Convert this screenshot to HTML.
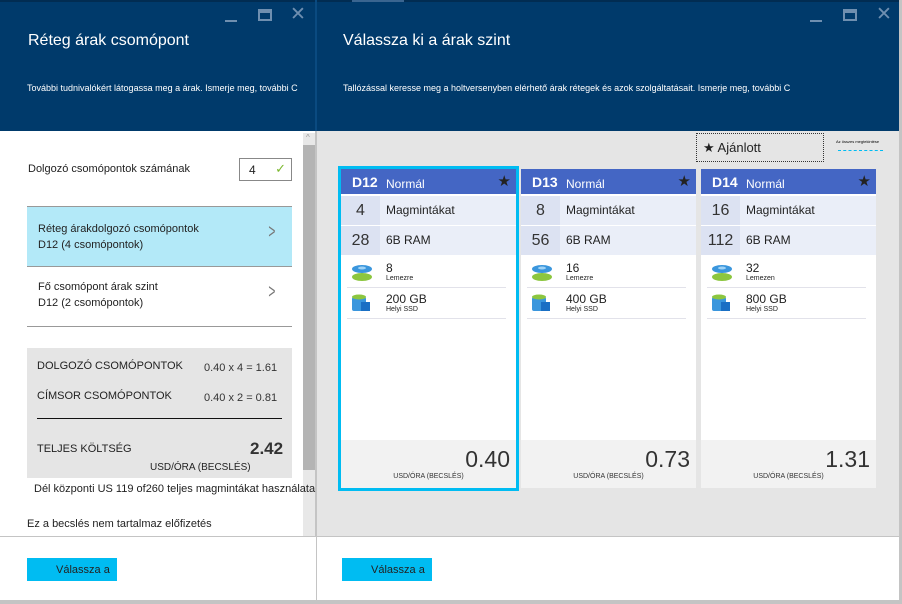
<!DOCTYPE html>
<html><head><meta charset="utf-8"><style>
*{margin:0;padding:0;box-sizing:border-box}
body{width:902px;height:604px;position:relative;overflow:hidden;background:#fff;font-family:"Liberation Sans",sans-serif;color:#222}
.a{position:absolute}
.hdr{background:#003a6b;color:#fff}
.t{font-size:16px;color:#fff}
.s{font-size:9px;color:#fff}
.ctrl{color:#6f8fb0}
.card{position:absolute;top:169px;width:175px;height:319px;background:#fff}
.ch{position:absolute;left:0;top:0;width:175px;height:25px;background:#4466c4;color:#fff}
.ch b{position:absolute;left:11px;top:5px;font-size:14px}
.ch span{position:absolute;left:45px;top:8px;font-size:12px}
.ch i{position:absolute;right:5px;top:3px;font-style:normal;font-size:15px;color:#222}
.row{position:absolute;left:0;width:175px;height:29px;background:#eaeef8}
.row .n{position:absolute;left:0;top:0;width:39px;height:29px;background:#dce2f2;text-align:center;font-size:16px;line-height:29px;color:#333}
.row .l{position:absolute;left:45px;top:0;line-height:29px;font-size:12px;color:#222}
.ic{position:absolute;left:0;width:175px;height:31px}
.ic .v{position:absolute;left:45px;top:4px;font-size:12px;color:#222}
.ic .u{position:absolute;left:45px;top:18px;font-size:7px;color:#222}
.ic .ln{position:absolute;left:6px;right:10px;bottom:0;height:1px;background:#e2e2ea}
.cf{position:absolute;left:0;top:271px;width:175px;height:48px;background:#f2f2f2}
.cf .p{position:absolute;right:6px;top:6px;font-size:23px;color:#333}
.cf .q{position:absolute;left:0;width:175px;text-align:center;top:33px;font-size:7px;color:#333}
</style></head><body>
<!-- headers -->
<div class="a hdr" style="left:0;top:0;width:316px;height:131px"></div>
<div class="a hdr" style="left:317px;top:0;width:585px;height:131px"></div>
<div class="a" style="left:0;top:0;width:902px;height:2px;background:#012c52"></div>
<div class="a" style="left:352px;top:0;width:52px;height:2px;background:#3a6590"></div>
<div class="a" style="left:315px;top:0;width:2px;height:604px;background:#c4c4c4"></div>
<div class="a" style="left:315px;top:0;width:2px;height:131px;background:#0a4a80"></div>
<!-- controls left -->
<div class="a" style="left:225px;top:20px;width:12px;height:2px;background:#6f8fb0"></div>
<div class="a" style="left:258px;top:9px;width:14px;height:12px;border:2px solid #6f8fb0;border-top-width:4px"></div>
<div class="a ctrl" style="left:290px;top:3px;font-size:19px">✕</div>
<div class="a" style="left:810px;top:20px;width:12px;height:2px;background:#6f8fb0"></div>
<div class="a" style="left:843px;top:9px;width:14px;height:12px;border:2px solid #6f8fb0;border-top-width:4px"></div>
<div class="a ctrl" style="left:876px;top:3px;font-size:19px">✕</div>
<div class="a t" style="left:28px;top:32px">Réteg árak csomópont</div>
<div class="a s" style="left:27px;top:83px">További tudnivalókért látogassa meg a árak. Ismerje meg, további C</div>
<div class="a t" style="left:343px;top:32px">Válassza ki a árak szint</div>
<div class="a s" style="left:343px;top:83px">Tallózással keresse meg a holtversenyben elérhető árak rétegek és azok szolgáltatásait. Ismerje meg, további C</div>
<!-- left content -->
<div class="a" style="left:303px;top:133px;width:12px;height:403px;background:#e8e8e8"></div>
<div class="a" style="left:303px;top:145px;width:12px;height:325px;background:#b4b4b4"></div>
<div class="a" style="left:306px;top:133px;font-size:8px;color:#999">^</div>
<div class="a" style="left:28px;top:163px;font-size:11px">Dolgozó csomópontok számának</div>
<div class="a" style="left:239px;top:158px;width:53px;height:23px;border:1px solid #888;font-size:12px;padding:4px 0 0 9px">4<span style="position:absolute;right:5px;top:2px;color:#7cb82f;font-size:13px">✓</span></div>
<div class="a" style="left:27px;top:206px;width:265px;height:60px;background:#b3e9f8;border-top:1px solid #999"></div>
<div class="a" style="left:38px;top:221px;font-size:11px;line-height:16px">Réteg árakdolgozó csomópontok<br>D12 (4 csomópontok)</div>
<div class="a" style="left:266px;top:221px;font-size:20px;color:#777;transform:scaleX(.6)">&gt;</div>
<div class="a" style="left:27px;top:266px;width:265px;height:1px;background:#999"></div>
<div class="a" style="left:38px;top:279px;font-size:11px;line-height:16px">Fő csomópont árak szint<br>D12 (2 csomópontok)</div>
<div class="a" style="left:266px;top:281px;font-size:20px;color:#777;transform:scaleX(.6)">&gt;</div>
<div class="a" style="left:27px;top:326px;width:265px;height:1px;background:#999"></div>
<div class="a" style="left:27px;top:348px;width:265px;height:130px;background:#e5e5e5"></div>
<div class="a" style="left:37px;top:360px;font-size:11px">DOLGOZÓ CSOMÓPONTOK</div>
<div class="a" style="left:204px;top:362px;font-size:11px;color:#333">0.40 x 4 = 1.61</div>
<div class="a" style="left:37px;top:390px;font-size:11px">CÍMSOR CSOMÓPONTOK</div>
<div class="a" style="left:204px;top:392px;font-size:11px;color:#333">0.40 x 2 = 0.81</div>
<div class="a" style="left:37px;top:418px;width:245px;height:1px;background:#111"></div>
<div class="a" style="left:37px;top:443px;font-size:11px">TELJES KÖLTSÉG</div>
<div class="a" style="left:250px;top:439px;font-size:17px;font-weight:bold;color:#333">2.42</div>
<div class="a" style="left:150px;top:462px;font-size:10px">USD/ÓRA (BECSLÉS)</div>
<div class="a" style="left:34px;top:483px;font-size:11px;white-space:nowrap">Dél központi US 119 of260 teljes magmintákat használata</div>
<div class="a" style="left:27px;top:518px;font-size:11px">Ez a becslés nem tartalmaz előfizetés</div>
<div class="a" style="left:0;top:536px;width:316px;height:68px;background:#fff;border-top:1px solid #c4c4c4"></div>
<div class="a" style="left:27px;top:558px;width:90px;height:23px;background:#00bcf2;font-size:11px;padding:6px 0 0 29px">Válassza a</div>
<!-- right content -->
<div class="a" style="left:317px;top:131px;width:585px;height:405px;background:#e5e5e5"></div>
<div class="a" style="left:696px;top:133px;width:128px;height:29px;border:1px dotted #333;font-size:13px;padding:6px 0 0 6px">★ Ajánlott</div>
<div class="a" style="left:836px;top:139px;font-size:4px;color:#000">Az összes megtekintése</div>
<div class="a" style="left:838px;top:150px;width:45px;height:1px;border-top:1px dashed #00bcf2"></div>

<div class="a" style="left:338px;top:166px;width:181px;height:325px;border:3px solid #00bcf2"></div>
<div class="card" style="left:341px">
 <div class="ch"><b>D12</b><span>Normál</span><i>★</i></div>
 <div class="row" style="top:27px"><div class="n">4</div><div class="l">Magmintákat</div></div>
 <div class="row" style="top:57px"><div class="n">28</div><div class="l">6B RAM</div></div>
 <div class="ic" style="top:88px"><svg class="a" style="left:10px;top:5px" width="22" height="20"><ellipse cx="11" cy="15" rx="10" ry="4" fill="#8cc63f"/><ellipse cx="11" cy="7" rx="10" ry="4" fill="#3a96dd"/><ellipse cx="11" cy="6" rx="4" ry="1.5" fill="#9fd2f5"/></svg><div class="v">8</div><div class="u">Lemezre</div><div class="ln"></div></div>
 <div class="ic" style="top:119px"><svg class="a" style="left:10px;top:5px" width="22" height="20"><rect x="1" y="4" width="14" height="14" rx="2" fill="#3a96dd"/><ellipse cx="8" cy="4" rx="7" ry="2.5" fill="#8cc63f"/><rect x="10" y="9" width="9" height="9" fill="#1a6fc4"/></svg><div class="v">200 GB</div><div class="u">Helyi SSD</div><div class="ln"></div></div>
 <div class="cf"><div class="p">0.40</div><div class="q">USD/ÓRA (BECSLÉS)</div></div>
</div>
<div class="card" style="left:521px">
 <div class="ch"><b>D13</b><span>Normál</span><i>★</i></div>
 <div class="row" style="top:27px"><div class="n">8</div><div class="l">Magmintákat</div></div>
 <div class="row" style="top:57px"><div class="n">56</div><div class="l">6B RAM</div></div>
 <div class="ic" style="top:88px"><svg class="a" style="left:10px;top:5px" width="22" height="20"><ellipse cx="11" cy="15" rx="10" ry="4" fill="#8cc63f"/><ellipse cx="11" cy="7" rx="10" ry="4" fill="#3a96dd"/><ellipse cx="11" cy="6" rx="4" ry="1.5" fill="#9fd2f5"/></svg><div class="v">16</div><div class="u">Lemezre</div><div class="ln"></div></div>
 <div class="ic" style="top:119px"><svg class="a" style="left:10px;top:5px" width="22" height="20"><rect x="1" y="4" width="14" height="14" rx="2" fill="#3a96dd"/><ellipse cx="8" cy="4" rx="7" ry="2.5" fill="#8cc63f"/><rect x="10" y="9" width="9" height="9" fill="#1a6fc4"/></svg><div class="v">400 GB</div><div class="u">Helyi SSD</div><div class="ln"></div></div>
 <div class="cf"><div class="p">0.73</div><div class="q">USD/ÓRA (BECSLÉS)</div></div>
</div>
<div class="card" style="left:701px">
 <div class="ch"><b>D14</b><span>Normál</span><i>★</i></div>
 <div class="row" style="top:27px"><div class="n">16</div><div class="l">Magmintákat</div></div>
 <div class="row" style="top:57px"><div class="n">112</div><div class="l">6B RAM</div></div>
 <div class="ic" style="top:88px"><svg class="a" style="left:10px;top:5px" width="22" height="20"><ellipse cx="11" cy="15" rx="10" ry="4" fill="#8cc63f"/><ellipse cx="11" cy="7" rx="10" ry="4" fill="#3a96dd"/><ellipse cx="11" cy="6" rx="4" ry="1.5" fill="#9fd2f5"/></svg><div class="v">32</div><div class="u">Lemezen</div><div class="ln"></div></div>
 <div class="ic" style="top:119px"><svg class="a" style="left:10px;top:5px" width="22" height="20"><rect x="1" y="4" width="14" height="14" rx="2" fill="#3a96dd"/><ellipse cx="8" cy="4" rx="7" ry="2.5" fill="#8cc63f"/><rect x="10" y="9" width="9" height="9" fill="#1a6fc4"/></svg><div class="v">800 GB</div><div class="u">Helyi SSD</div><div class="ln"></div></div>
 <div class="cf"><div class="p">1.31</div><div class="q">USD/ÓRA (BECSLÉS)</div></div>
</div>
<div class="a" style="left:317px;top:536px;width:585px;height:1px;background:#c4c4c4"></div>
<div class="a" style="left:342px;top:558px;width:90px;height:23px;background:#00bcf2;font-size:11px;padding:6px 0 0 29px">Válassza a</div>
<div class="a" style="left:0;top:600px;width:902px;height:4px;background:#c4c4c4"></div>
<div class="a" style="left:899px;top:0;width:3px;height:604px;background:#c4c4c4"></div>
</body></html>
